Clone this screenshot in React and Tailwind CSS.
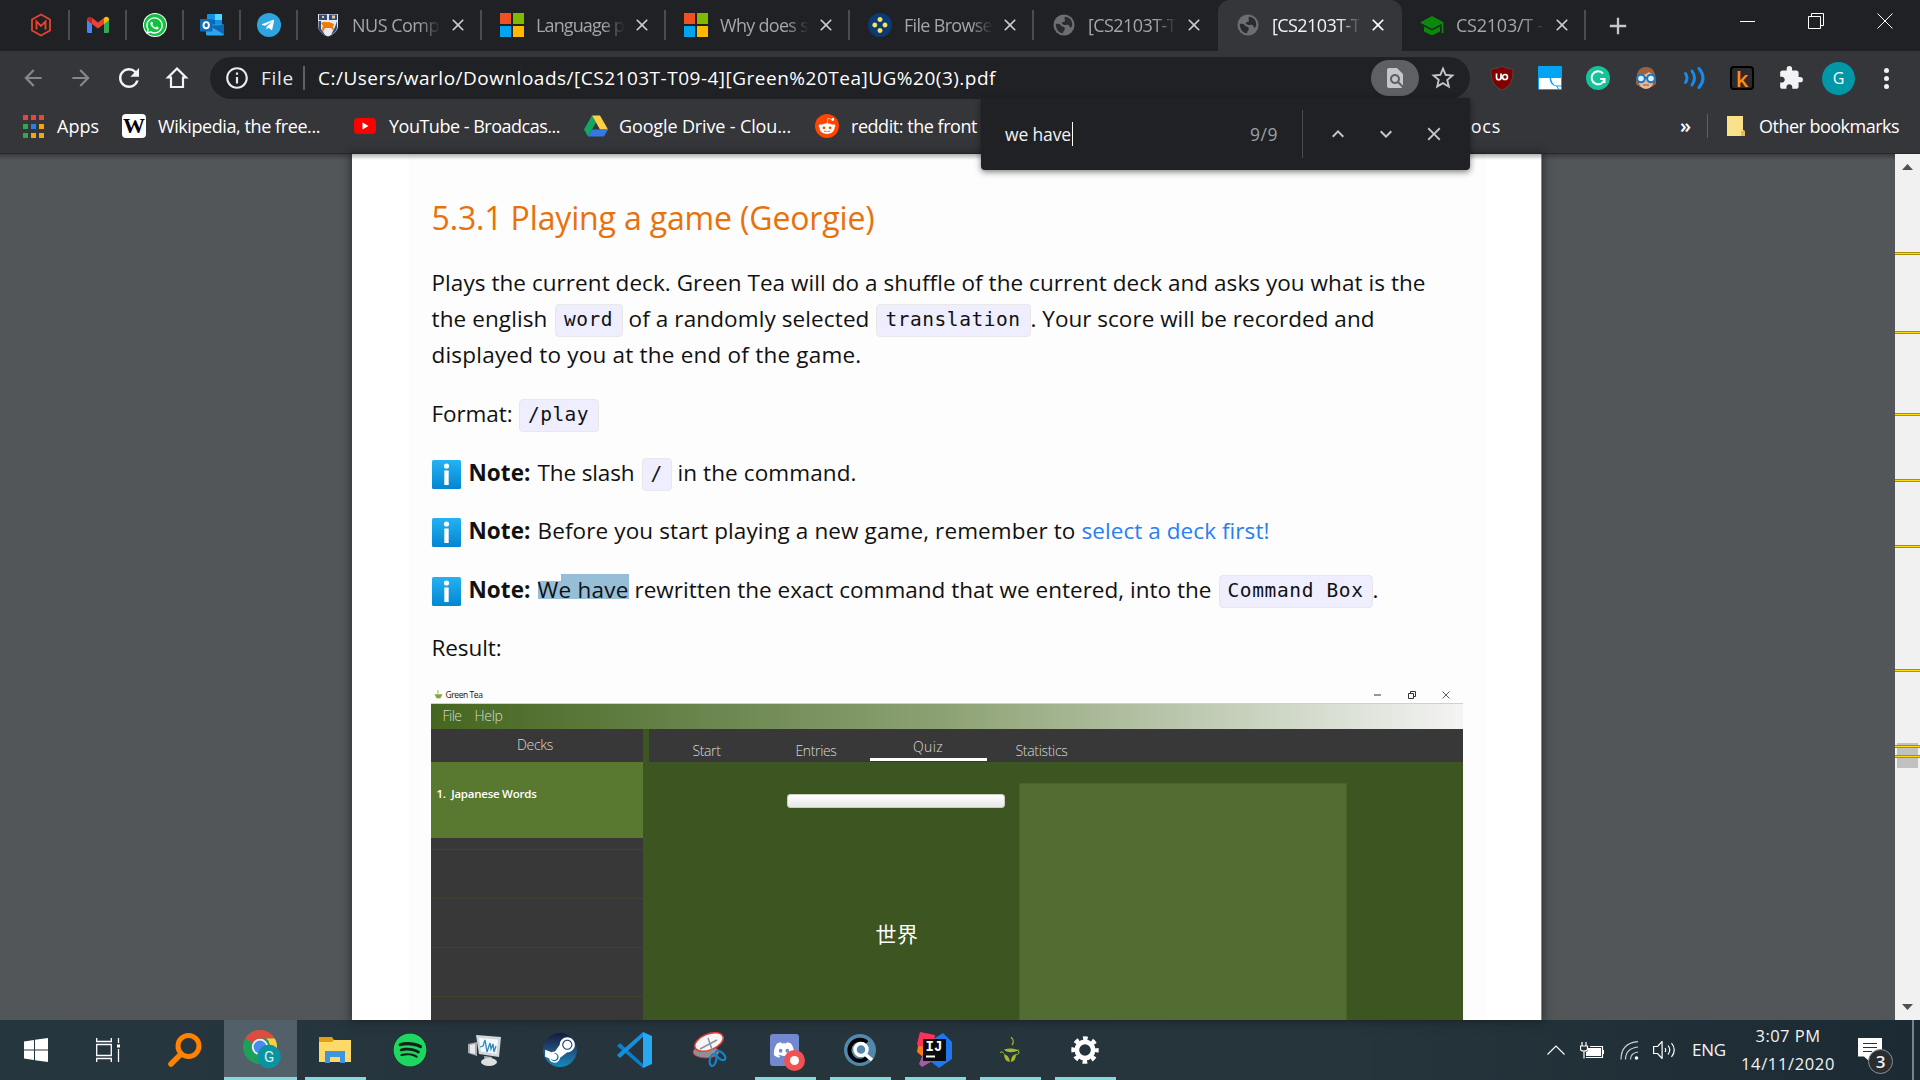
import React, { useLayoutEffect, useRef } from "react";
import { FaWhatsapp, FaTelegramPlane, FaRedditAlien, FaSpotify, FaSteamSymbol, FaDiscord } from "react-icons/fa";
import { MdExtension, MdStarBorder, MdRefresh, MdArrowBack, MdArrowForward, MdInfoOutline, MdAdd, MdClose, MdKeyboardArrowUp, MdKeyboardArrowDown, MdFindInPage } from "react-icons/md";

/* One-line label whose letter spacing is adjusted so the text fills its box. */
function Fit({ className = "", children }) {
  const outer = useRef(null);
  const inner = useRef(null);
  useLayoutEffect(() => {
    const el = inner.current;
    el.style.letterSpacing = "0px";
    const gap = outer.current.getBoundingClientRect().width - el.getBoundingClientRect().width;
    el.style.letterSpacing = gap / el.textContent.length + "px";
  });
  return (
    <span ref={outer} className={"block shrink-0 whitespace-pre " + className}>
      <span ref={inner} className="inline-block">{children}</span>
    </span>
  );
}

/* ---------- small logos ---------- */
const Svg = ({ className, box = "0 0 24 24", children }) => (
  <svg viewBox={box} className={"block shrink-0 " + className} fill="none">{children}</svg>
);

const MaxLogo = () => (
  <Svg className="size-6"><path d="M12 1.500 21 6.500v11L12 22.500 3 17.500v-11z" stroke="#e8432e" strokeWidth="1.800" /><path d="M7.500 16.500v-8l4.500 4.500 4.500-4.500v8" stroke="#e8432e" strokeWidth="1.900" /></Svg>
);
const Gmail = () => (
  <Svg className="size-6">
    <path d="M1 6v12.500A1.500 1.500 0 0 0 2.500 20H6V10z" fill="#4285f4" />
    <path d="M23 6v12.500a1.500 1.500 0 0 1-1.500 1.500H18V10z" fill="#34a853" />
    <path d="M18 5v6l5-4V6.200C23 4 20.500 3 18.800 4.300z" fill="#fbbc04" />
    <path d="M6 11V4.800l6 4.600 6-4.600V11l-6 4.600z" fill="#ea4335" />
    <path d="M1 6.200V7l5 4V5l-.8-.7C3.500 3 1 4 1 6.200z" fill="#c5221f" />
  </Svg>
);
const Outlook = () => (
  <Svg className="size-6">
    <path d="M8 1h13a1 1 0 0 1 1 1v11H7V2a1 1 0 0 1 1-1z" fill="#1490df" />
    <path d="M15 1h6a1 1 0 0 1 1 1v5h-7z" fill="#50d9ff" /><path d="M7 7h8v6H7z" fill="#0364b8" />
    <path d="M6 11.500h18V21a1.500 1.500 0 0 1-1.500 1.500h-15A1.500 1.500 0 0 1 6 21z" fill="#28a8ea" />
    <path d="M24 12v9.500L9 12.500z" fill="#1066b5" />
    <rect x="0" y="6" width="12.500" height="12.500" rx="1" fill="#0f6cbd" />
    <ellipse cx="6.200" cy="12.200" rx="2.700" ry="3.100" stroke="#fff" strokeWidth="1.900" />
  </Svg>
);
const Nus = () => (
  <Svg className="size-6">
    <path d="M2 1h20v12c0 5-5 9-10 10.500C7 22 2 18 2 13z" fill="#e9e9ec" />
    <path d="M3 1.500h8V7H3zM13 1.500h8V7h-8z" fill="#2f4d7c" /><path d="M6 3h2v2H6zM16 2.500h3v3h-3z" fill="#e8c9a0" />
    <path d="M5 10c3-2 6 0 8-1l5 2-1 3 1 4-3-3H9l-2 4-1-3 1-3z" fill="#ef7c00" />
    <path d="M2.500 8v6c0 4 4 7 7 8.500L5 16V8zM21 8v6c0 4-3 6-6 8l4-8z" fill="#2f4d7c" />
  </Svg>
);
const Microsoft = () => (
  <span className="grid size-6 shrink-0 grid-cols-2 gap-[2px]">
    <i className="bg-[#f25022]" /><i className="bg-[#7fba00]" /><i className="bg-[#00a4ef]" /><i className="bg-[#ffb900]" />
  </span>
);
const FileBrowser = () => (
  <Svg className="size-6"><circle cx="12" cy="12" r="12" fill="#0b3a75" />
    {[[12, 6.5], [6.8, 12], [17, 12], [12, 17.5]].map(([x, y]) => <circle key={x + "-" + y} cx={x} cy={y} r="2.200" fill="#ffe25c" stroke="#ffe25c88" strokeWidth="1" />)}
  </Svg>
);
const Globe = () => (
  <Svg className="size-[22px]"><circle cx="12" cy="12" r="11.500" fill="#6b6e73" />
    <path d="M3 11c3-1 5 0 6 2 2 1 4 1 4 3s-2 2-2 5c-5 0-8-5-8-10zM13 3c5 0 8 4 8 9-1 3-2 4-3 2-1-3-2-2-4-2-3 0-5-1-4-3 2-1 3 0 3-2s-1-3 0-4z" fill="#292b2e" />
  </Svg>
);
const GradCap = () => (
  <Svg className="h-[24px] w-6"><path d="M12 3 24 9.500 12 16 0 9.500z" fill="#0a8a0a" /><path d="M4 13.500v5l8 4 8-4v-5l-8 4z" fill="#0a8a0a" /><path d="M22.500 10v10" stroke="#0a8a0a" strokeWidth="1.800" /></Svg>
);
const Drive = () => (
  <Svg className="h-[22px] w-6" box="0 0 24 22">
    <path d="M8 0.500 0 14.500l4 7 8-14z" fill="#11a861" /><path d="M8 .5h8l8 14h-8z" fill="#ffcf48" /><path d="M4 21.500h16l4-7H8z" fill="#3777e3" />
  </Svg>
);
const Ublock = () => (
  <Svg className="size-6"><path d="M12 0c3 2 7 3 11 3 0 9-1 17-11 21C2 20 1 12 1 3c4 0 8-1 11-3z" fill="#800000" stroke="#555" strokeWidth=".7" />
    <path d="M6.500 7.500v4c0 3 4.500 3 4.500 0v-4M11 7.500v5.500" stroke="#fff" strokeWidth="1.700" /><circle cx="15" cy="11" r="2.500" stroke="#fff" strokeWidth="1.700" />
  </Svg>
);
const BlueCard = () => (
  <Svg className="size-6"><rect width="24" height="24" rx="1" fill="#03a4f4" /><path d="M1 12h10.500c.8 6 3 7.500 6.500 8l2 3H1z" fill="#fff" /><path d="M13 12h10v7.500h-4.500c-3.500-.5-4.700-3.500-5.500-7.500z" fill="#fff" /><path d="M19.500 20.500H23V23h-2z" fill="#fff" /></Svg>
);
const Grammarly = () => (
  <Svg className="size-6"><circle cx="12" cy="12" r="12" fill="#15c39a" /><path d="M17 7.500A6.500 6.500 0 1 0 18.500 13H14m4.500 0v4" stroke="#fff" strokeWidth="2" /></Svg>
);
const Face = () => (
  <Svg className="size-6"><path d="M2 18C2 6 5 1 12 1s10 5 10 17l-4 3H6z" fill="#a0623b" /><path d="M5 9c5 0 8-1 10-3l4 3v8c0 3-4 6-7 6s-7-3-7-6z" fill="#e8b796" />
    <circle cx="7" cy="12.500" r="3.800" fill="#dff1fd" stroke="#1b77c5" strokeWidth="2" /><circle cx="17" cy="12.500" r="3.800" fill="#dff1fd" stroke="#1b77c5" strokeWidth="2" /><path d="M10.500 12h3" stroke="#1b77c5" strokeWidth="2" /><path d="M9 19h6" stroke="#9b4a32" /></Svg>
);
const Waves = () => (
  <Svg className="size-6"><g stroke="#148cf0" strokeWidth="3" strokeLinecap="round"><path d="M3.500 7.500q3 4.500 0 9" /><path d="M10 5q5 7 0 14" /><path d="M17 2.500q8 9.500 0 19" /></g></Svg>
);

/* ---------- tab strip ---------- */
const Sep = () => <i className="block h-[30px] w-[2px] shrink-0 bg-[#4a4c50]" />;

function Pinned({ children }) {
  return (
    <div className="flex w-[57px] items-center pb-px">
      <div className="flex flex-1 justify-center">{children}</div><Sep />
    </div>
  );
}

function Tab({ icon, title, w, active, last = true }) {
  return (
    <div className={"relative flex h-[51px] w-[184px] shrink-0 items-center pb-px pl-[17px] " + (active ? "rounded-t-xl bg-[#35363a]" : "")}>
      <span className="flex w-[26px] shrink-0 justify-center">{icon}</span>
      <div className="ml-[11px] w-[89px] mask-r-from-75% mask-r-to-100%">
        <Fit className={w + " text-[18px] leading-6 " + (active ? "text-[#f1f3f4]" : "text-[#a3a7ac]")}>{title}</Fit>
      </div>
      <MdClose className={"ml-[7px] size-[20px] shrink-0 " + (active ? "text-white" : "text-[#c8cacd]")} />
      {last && <span className="ml-auto"><Sep /></span>}
    </div>
  );
}

function TabStrip() {
  return (
    <div className="flex h-[51px] items-center bg-[#202124] pl-[13px]">
      <Pinned><MaxLogo /></Pinned>
      <Pinned><Gmail /></Pinned>
      <Pinned>
        <span className="flex size-6 items-center justify-center rounded-full bg-white"><span className="flex size-[22px] items-center justify-center rounded-full bg-[#10c13f]"><FaWhatsapp className="size-[19px] text-white" /></span></span>
      </Pinned>
      <Pinned><Outlook /></Pinned>
      <Pinned><span className="flex size-6 items-center justify-center rounded-full bg-[#2ca5e0]"><FaTelegramPlane className="mr-[2px] size-[14px] text-white" /></span></Pinned>
      <Tab icon={<Nus />} title="NUS Comp" w="w-[87px]" />
      <Tab icon={<Microsoft />} title="Language p" w="w-[88px]" />
      <Tab icon={<Microsoft />} title="Why does s" w="w-[88px]" />
      <Tab icon={<FileBrowser />} title="File Browse" w="w-[88px]" />
      <Tab icon={<Globe />} title="[CS2103T-T" w="w-[88px]" last={false} />
      <Tab icon={<Globe />} title="[CS2103T-T" w="w-[88px]" active last={false} />
      <Tab icon={<GradCap />} title="CS2103/T -" w="w-[87px]" />
      <MdAdd className="ml-[18px] size-[28px] text-[#c4c6c9]" />
      <Svg className="mb-[9px] ml-[108px] size-[16px]" box="0 0 16 16"><path d="M0 8.500h15" stroke="#fff" /></Svg>
      <Svg className="mb-[9px] ml-[52px] size-[16px]" box="0 0 16 16"><path d="M.5 3.500h12v12H.5zM3.500 3.500v-3h12v12h-3" stroke="#fff" /></Svg>
      <Svg className="mb-[9px] ml-[53px] size-[16px]" box="0 0 16 16"><path d="m.5.5 15 15m0-15-15 15" stroke="#fff" /></Svg>
    </div>
  );
}

/* ---------- address bar ---------- */
function AddressBar() {
  return (
    <div className="flex h-[54px] items-center bg-[#35363a] pl-[20px]">
      <MdArrowBack className="size-[26px] text-[#85878b]" />
      <MdArrowForward className="ml-[22px] size-[26px] text-[#85878b]" />
      <MdRefresh className="ml-[20px] size-[30px] text-[#f1f3f4]" />
      <Svg className="ml-[21px] size-6"><path d="M12 2.500 3 11.500h3V21h12v-9.500h3z" stroke="#f1f3f4" strokeWidth="2.200" /></Svg>
      <div className="ml-[21px] flex h-[42px] w-[1260px] items-center rounded-full bg-[#202124] pl-[14px] text-white">
        <MdInfoOutline className="size-[26px] text-[#e8eaed]" />
        <Fit className="ml-[11px] w-[33px] text-[19px] leading-6 text-[#e8eaed]">File</Fit>
        <i className="ml-[9px] h-6 w-[2px] bg-[#5f6063]" />
        <Fit className="ml-[13px] w-[678px] text-[19px] leading-6">C:/Users/warlo/Downloads/[CS2103T-T09-4][Green%20Tea]UG%20(3).pdf</Fit>
        <span className="ml-auto flex h-9 w-12 items-center justify-center rounded-full bg-[#5f6063]"><MdFindInPage className="size-[24px] text-[#c4c6c9]" /></span>
        <MdStarBorder className="ml-[10px] mr-[13px] size-[28px] text-[#c4c6c9]" />
      </div>
      <div className="ml-[20px] flex items-center gap-6">
        <Ublock /><BlueCard /><Grammarly /><Face /><Waves />
        <span className="flex size-6 items-center justify-center rounded border-2 border-black bg-[#2b2b2b] text-[22px] font-semibold leading-none text-[#ff8c12]">k</span>
        <MdExtension className="size-[26px] text-[#f1f3f4]" />
      </div>
      <span className="ml-[18px] flex size-[33px] items-center justify-center rounded-full bg-[#0097a7] text-[16px] text-white">G</span>
      <span className="ml-[29px] flex flex-col gap-[3px]"><i className="size-[5px] rounded-full bg-[#f1f3f4]" /><i className="size-[5px] rounded-full bg-[#f1f3f4]" /><i className="size-[5px] rounded-full bg-[#f1f3f4]" /></span>
    </div>
  );
}

const appDots = ["bg-[#e8453c]", "bg-[#e8453c]", "bg-[#e8453c]", "bg-[#2da94f]", "bg-[#2f7de1]", "bg-[#f6a609]", "bg-[#2da94f]", "bg-[#f6a609]", "bg-[#f6a609]"];

function Bookmarks() {
  return (
    <div className="flex h-[49px] items-center border-b border-[#28292c] bg-[#35363a] pb-[6px] pl-[23px] text-[18px] leading-6 text-white">
      <span className="grid grid-cols-3 gap-x-[3px] gap-y-[4px]">{appDots.map((c, i) => <i key={i} className={"size-[5px] " + c} />)}</span>
      <Fit className="ml-[13px] w-[42px]">Apps</Fit>
      <span className="ml-[23px] flex size-6 shrink-0 items-center justify-center rounded bg-white font-['Liberation_Serif',serif] text-[22px] font-bold text-black">W</span>
      <Fit className="ml-[12px] w-[162px]">Wikipedia, the free...</Fit>
      <Svg className="ml-[34px] h-[16px] w-[22px]" box="0 0 22 16"><rect width="22" height="16" rx="4" fill="#f00" /><path d="M8.500 4.500v7l6-3.500z" fill="#fff" /></Svg>
      <Fit className="ml-[13px] w-[171px]">YouTube - Broadcas...</Fit>
      <span className="ml-[24px]"><Drive /></span>
      <Fit className="ml-[11px] w-[172px]">Google Drive - Clou...</Fit>
      <span className="ml-[24px] flex size-6 shrink-0 items-center justify-center rounded-full bg-[#ff4500]"><FaRedditAlien className="size-[18px] text-white" /></span>
      <Fit className="ml-[12px] w-[126px]">reddit: the front</Fit>
      <Fit className="ml-[480px] w-[44px]">Docs</Fit>
      <Fit className="ml-[179px] w-[12px] text-[20px] font-semibold">»</Fit>
      <i className="ml-[15px] h-6 w-px bg-[#5f6063]" />
      <Svg className="ml-[19px] h-[22px] w-[18px]" box="0 0 18 22"><path d="M0 1h16v14l2 1v5H0z" fill="#fbe08a" /><path d="M14 16h4v5h-4z" fill="#e9bd4a" /></Svg>
      <Fit className="ml-[14px] w-[140px]">Other bookmarks</Fit>
    </div>
  );
}

function FindBar() {
  return (
    <div className="absolute left-[981px] top-[98px] flex h-[72px] w-[489px] items-center rounded-b bg-[#202124] pl-6 text-[17.500px] text-[#f1f3f4] shadow-[0_2px_6px_rgba(0,0,0,0.5)]">
      <Fit className="w-[66px] leading-6">we have</Fit>
      <i className="ml-px h-6 w-px bg-white" />
      <Fit className="ml-[177px] w-[28px] leading-6 text-[#9aa0a6]">9/9</Fit>
      <i className="ml-[24px] h-12 w-px bg-[#4a4c50]" />
      <MdKeyboardArrowUp className="ml-[23px] size-6 text-[#c4c6c9]" />
      <MdKeyboardArrowDown className="ml-6 size-6 text-[#c4c6c9]" />
      <MdClose className="ml-[25px] size-[22px] text-[#c4c6c9]" />
    </div>
  );
}

/* ---------- document ---------- */
function Code({ className, text, w }) {
  return (
    <code className={"mt-[2px] flex h-[33px] shrink-0 items-center justify-center rounded-[4px] border border-[#e8e8e8] bg-[#eeeeff] font-['DejaVu_Sans_Mono',monospace] text-[19.500px] " + className}>
      <Fit className={w + " leading-8"}>{text}</Fit>
    </code>
  );
}

function Note({ children, className }) {
  return (
    <div className={"flex h-9 items-center " + className}>
      <Svg className="mt-[3px] size-[29px]" box="0 0 29 29">
        <defs><linearGradient id="info" x2="0" y2="1"><stop stopColor="#25b2f3" /><stop offset="1" stopColor="#0286d2" /></linearGradient></defs>
        <rect width="29" height="29" rx="1.500" fill="url(#info)" /><circle cx="14.500" cy="6" r="2.600" fill="#fff" /><path d="M12.300 10.500h4.400V25h-4.400z" fill="#fff" />
      </Svg>
      <Fit className="ml-[8px] w-[62px] font-bold">Note:</Fit>
      {children}
    </div>
  );
}

function GreenTea() {
  return (
    <div className="-ml-px mt-[20px] w-[1032px] font-light">
      <div className="flex h-[17px] items-center pl-[3px]">
        <Svg className="size-[9px]" box="0 0 10 10"><path d="M4 0 5 3 4 4M1 5h8L7 9H3z" fill="#8aa23c" stroke="#8aa23c" strokeWidth=".6" /></Svg>
        <Fit className="ml-[3px] mt-px w-[37px] text-[8.500px] font-normal leading-4">Green Tea</Fit>
        <Svg className="ml-[891px] size-[8px]" box="0 0 8 8"><path d="M0 4h7" stroke="#333" /></Svg>
        <Svg className="ml-[26px] size-[8px]" box="0 0 8 8"><path d="M.5 2.500h5v5h-5zM2.500 2.500v-2h5v5h-2" stroke="#333" /></Svg>
        <Svg className="ml-[26px] size-[8px]" box="0 0 8 8"><path d="m.5.5 7 7m0-7-7 7" stroke="#333" strokeWidth=".8" /></Svg>
      </div>
      <div className="flex h-[26px] items-center border-t border-[#cdd6bd] bg-linear-to-r from-[#45661f] via-[#8da274] to-[#f4f4f4] pb-[2px] pl-[12px] text-[14px] text-[#d5dccb]">
        <Fit className="w-[19px]">File</Fit><Fit className="ml-[13px] w-[28px]">Help</Fit>
      </div>
      <div className="flex h-[291px] bg-[#3d5520] text-[14px] text-[#d8d8d8]">
        <div className="flex w-[212px] flex-col bg-[#383838]">
          <div className="flex h-[33px] justify-center"><Fit className="mr-[3px] mt-[6px] w-[36px] leading-5">Decks</Fit></div>
          <div className="h-[76px] bg-[#58792f] pl-[6px] pt-[22px] text-[11.500px] font-semibold text-white"><Fit className="w-[100px] leading-5">1.  Japanese Words</Fit></div>
          <i className="h-[12px] border-b border-[#40442f]" />
          <i className="h-[49px] border-b border-[#40442f]" />
          <i className="h-[49px] border-b border-[#40442f]" />
          <i className="h-[49px] border-b border-[#40442f]" />
        </div>
        <div className="ml-[6px] flex-1">
          <div className="flex h-[33px] bg-[#383838] pl-[44px] leading-5">
            <Fit className="mt-[12px] w-[28px]">Start</Fit>
            <Fit className="ml-[75px] mt-[12px] w-[41px]">Entries</Fit>
            <div className="ml-[33px] flex w-[117px] flex-col items-center"><Fit className="mt-[8px] w-[30px]">Quiz</Fit><i className="mt-px h-[3px] w-full bg-white" /></div>
            <Fit className="ml-[29px] mt-[12px] w-[52px]">Statistics</Fit>
          </div>
          <div className="flex">
            <div className="ml-[138px] w-[218px] pt-[32px]">
              <div className="h-[14px] rounded-[3px] border border-[#c9cfc0] bg-linear-to-b from-white to-[#e8e8e8]" />
              <div className="mt-[109px] flex pl-[89px]"><Fit className="w-[43px] font-['Noto_Sans_CJK_JP','Noto_Sans_CJK_SC',sans-serif] text-[21px] font-normal leading-8 text-white">世界</Fit></div>
            </div>
            <div className="ml-[14px] mt-[21px] h-[237px] w-[328px] border border-b-0 border-[#486229] bg-[#526c31]" />
          </div>
        </div>
      </div>
    </div>
  );
}

function Document() {
  return (
    <div className="h-[866px] w-[1190px] overflow-hidden border-r border-[#85888a] bg-white px-[56.500px] shadow-[0_0_8px_2px_rgba(20,25,28,0.55)]">
      <div className="h-full w-[1077px] bg-[#fdfdfd] pl-[23px] pt-[44px] text-[22.500px] leading-9 text-[#111]">
        <Fit className="w-[443px] text-[32px] leading-10 text-[#e8710a]">5.3.1 Playing a game (Georgie)</Fit>
        <Fit className="mt-[27px] w-[994px]">Plays the current deck. Green Tea will do a shuffle of the current deck and asks you what is the</Fit>
        <div className="flex h-9 items-center">
          <Fit className="w-[116px]">the english</Fit><Code className="ml-[7px] w-[68px]" text="word" w="w-[49px]" />
          <Fit className="ml-[6px] w-[241px]">of a randomly selected</Fit><Code className="ml-[6px] w-[155px]" text="translation" w="w-[135px]" />
          <Fit className="w-[344px]">. Your score will be recorded and</Fit>
        </div>
        <Fit className="w-[430px]">displayed to you at the end of the game.</Fit>
        <div className="mt-[23px] flex h-9 items-center"><Fit className="w-[81px]">Format:</Fit><Code className="ml-[6px] w-[80px]" text="/play" w="w-[61px]" /></div>
        <Note className="mt-[23px]">
          <Fit className="ml-[7px] w-[97px]">The slash</Fit><Code className="ml-[7px] w-[30px]" text="/" w="w-[12px]" /><Fit className="ml-[6px] w-[179px]">in the command.</Fit>
        </Note>
        <Note className="mt-[22px]">
          <Fit className="ml-[7px] w-[538px]">Before you start playing a new game, remember to</Fit><Fit className="ml-[6px] w-[188px] text-[#2a7ff0]">select a deck first!</Fit>
        </Note>
        <Note className="mt-[23px]">
          <span className="relative ml-[7px] block">
            <i className="absolute left-0 top-[9px] h-[18px] w-[23px] bg-[#97bed7]" />
            <i className="absolute left-[23px] top-[2px] h-[25px] w-[68px] bg-[#97bed7]" />
            <Fit className="relative w-[91px]">We have</Fit>
          </span>
          <Fit className="ml-[6px] w-[577px]">rewritten the exact command that we entered, into the</Fit><Code className="ml-[7px] w-[154px]" text="Command Box" w="w-[136px]" /><Fit className="w-[5px]">.</Fit>
        </Note>
        <Fit className="mt-[22px] w-[70px]">Result:</Fit>
        <GreenTea />
      </div>
    </div>
  );
}

const hits = ["top-[98px]", "top-[177px]", "top-[259px]", "top-[325px]", "top-[391px]", "top-[515px]", "top-[591px]", "top-[601px]"];

function Viewer() {
  return (
    <div className="relative flex h-[866px] bg-[#525659] pl-[352px]">
      <Document />
      <i className="absolute inset-x-0 top-0 h-[6px] bg-linear-to-b from-black/30 to-transparent" />
      <div className="relative ml-auto flex w-[25px] flex-col items-center justify-between bg-[#f1f1f1] py-[10px]">
        <Svg className="h-[6px] w-[11px]" box="0 0 11 6"><path d="M5.500 0 11 6H0z" fill="#505050" /></Svg>
        <i className="absolute left-[2px] top-[589px] h-[25px] w-[21px] bg-[#c1c1c1]" />
        {hits.map((t) => <i key={t} className={"absolute left-0 h-[3px] w-full border-y border-[#ac9200] bg-[#ffdd00] " + t} />)}
        <Svg className="h-[6px] w-[11px]" box="0 0 11 6"><path d="M5.500 6 11 0H0z" fill="#505050" /></Svg>
      </div>
    </div>
  );
}

/* ---------- taskbar ---------- */
function Cell({ children, open, active }) {
  return (
    <div className={"flex h-[60px] w-[73px] shrink-0 flex-col items-center " + (active ? "bg-[#52606a]" : "")}>
      <div className="flex h-[57px] items-center pr-px pt-[2px]">{children}</div>
      {(open || active) && <i className={"h-[3px] bg-[#82dadb] " + (active ? "w-full" : "w-[61px]")} />}
    </div>
  );
}

const Chrome = () => (
  <Svg className="ml-[5px] h-[40px] w-[40px]" box="0 0 40 40">
    <circle cx="17" cy="17" r="17" fill="#1fa05a" /><path d="M17 0a17 17 0 0 1 14.700 8.500H17a8.500 8.500 0 0 0-7.400 4.300L2.300 8.500A17 17 0 0 1 17 0z" fill="#e04a3f" />
    <path d="M31.700 8.500A17 17 0 0 1 17 34l7.400-12.700a8.500 8.500 0 0 0-1-12.800z" fill="#ffcd40" />
    <circle cx="17" cy="17" r="8.200" fill="#f1f1f1" /><circle cx="17" cy="17" r="6.400" fill="#4a8af4" />
    <circle cx="26" cy="26.500" r="11.700" fill="#0b93a2" /><text x="26" y="32" textAnchor="middle" fontSize="15" fill="#d8f3f5" fontFamily="Roboto, sans-serif">G</text>
  </Svg>
);
const Explorer = () => (
  <Svg className="h-[26px] w-8" box="0 0 32 26"><path d="M0 0h13l2 3h17v22H0z" fill="#e0a010" /><path d="M0 5h13l2-2h17v22H0z" fill="#ffd968" /><path d="M6 26V14h20v12h-5v-6H11v6z" fill="#3d95dd" /></Svg>
);
const Monitor = () => (
  <Svg className="size-[34px]" box="0 0 34 34"><path d="M0 11 9 9v14l-9-3z" fill="#a9adb0" /><path d="m2 12 5-1v10l-5-1z" fill="#e7e9ea" /><path d="M8 2l25 2-2 20-20-3z" fill="#d5d8da" /><path d="m11 5 19 1.500-1.500 14.500L13 18.500z" fill="#f3f9fd" />
    <path d="m12 14 3-1 2-6 2 12 3-9 1 6 2-5 1 8 2-6" stroke="#2d87bd" strokeWidth="1.300" /><path d="m16 23 8 1-1 5h-6z" fill="#b2b5b7" /><ellipse cx="21" cy="29" rx="8" ry="4" fill="#dcdedf" /></Svg>
);
const VsCode = () => (
  <Svg className="size-9" box="0 0 36 36"><path d="m3 11 24 22-1 3L0 14z" fill="#0a7fcb" /><path d="m3 26 24-22-1-4L0 23z" fill="#1590dd" /><path d="m26 0 9 4v28l-9 4z" fill="#27a9f2" /></Svg>
);
const Snip = () => (
  <Svg className="size-9" box="0 0 36 36"><ellipse cx="14" cy="20" rx="13" ry="6" fill="#8e9194" stroke="#c33" strokeWidth=".8" /><ellipse cx="17" cy="10" rx="15" ry="8" transform="rotate(-22 17 10)" fill="#f5f6f7" stroke="#e23b35" strokeWidth="1.500" />
    <path d="m16 6 6 17M8 17 25 8" stroke="#8b9399" strokeWidth="1.500" /><g stroke="#1682c5" strokeWidth="2.200"><ellipse cx="21" cy="28" rx="3.200" ry="6" transform="rotate(12 21 28)" /><ellipse cx="28.500" cy="23.500" rx="3.200" ry="6" transform="rotate(-48 28.500 23.500)" /></g></Svg>
);
const Discord = () => (
  <span className="relative mr-[2px] flex h-[32px] w-[29px] items-center justify-center rounded-[3px] bg-[#7289cf]">
    <FaDiscord className="size-[22px] text-white" />
    <i className="absolute -bottom-[5px] -right-[6px] flex size-[21px] items-center justify-center rounded-full bg-[#f05252]"><i className="size-[9px] rounded-full bg-white" /></i>
  </span>
);
const QSearch = () => (
  <Svg className="size-8" box="0 0 32 32"><circle cx="16" cy="16" r="16" fill="#5189ac" /><path d="M23 8.500A10.500 10.500 0 1 0 23 24" stroke="#000" strokeWidth="4" /><circle cx="17" cy="15.500" r="6" stroke="#fff" strokeWidth="3.500" /><path d="m21 20 7 6" stroke="#fff" strokeWidth="3.500" /></Svg>
);
const IntelliJ = () => (
  <Svg className="size-9" box="0 0 36 36"><path d="m3 0 15 3-2 20H6L0 12z" fill="#fe315d" /><path d="m1 14 12 1v8l-7 2-6-5z" fill="#f97a12" /><path d="m6 22 13 5-14 8-3-3z" fill="#a65aa0" /><path d="m18 6 8-5 9 9v17l-13 9-9-7z" fill="#1f77ee" /><path d="M6 7h23v22H6z" fill="#0c0c0c" />
    <text x="8.500" y="19" fontSize="14" fontWeight="700" fill="#fff" fontFamily="Liberation Mono, monospace">IJ</text><path d="M9 24.500h9" stroke="#fff" strokeWidth="2" /></Svg>
);
const Tea = () => (
  <Svg className="h-[26px] w-[22px]" box="0 0 22 26"><path d="M12 0q4 4 1 8" stroke="#a4a82c" strokeWidth="1.300" /><path d="M5 12.500q7-2 12 0l4 .5q-4 2-9 2.200-5 0-7-2.700z" fill="#a7b82e" /><path d="M1 15.500q2-2 4 1M19 14q3 2-2 4" stroke="#a7b82e" /><path d="M5 17q5 1 6 8-6-1-6-8zM17 17q-5 1-5 8 5-1 5-8z" fill="#a7b82e" /></Svg>
);
const Gear = () => (
  <Svg className="size-[28px]"><circle cx="12" cy="12" r="7" stroke="#fff" strokeWidth="4" /><circle cx="12" cy="12" r="10" stroke="#fff" strokeWidth="3.500" strokeDasharray="4 3.854" strokeDashoffset="2" /></Svg>
);

function Taskbar() {
  return (
    <div className="flex h-[60px] items-center bg-linear-to-r from-[#26363e] via-[#26343c] via-70% to-[#1c2b33] text-[#f3f3f3]">
      <Svg className="ml-[24px] size-6"><path d="M0 3.500 10 2v9.500H0zM11 1.800 24 0v11.500H11zM0 12.500h10V22L0 20.500zM11 12.500h13V24l-13-1.800z" fill="#fff" /></Svg>
      <Svg className="ml-[48px] h-[24px] w-[25px]" box="0 0 25 24"><path d="M.7 0v3.500h14.600V0M.7 6.500h14.600v11H.7zM.7 24v-3.500h14.600V24M22.500 0v5M22.500 11v13" stroke="#fff" strokeWidth="1.300" /><path d="M21 6.500h3v3h-3z" fill="#fff" /></Svg>
      <Svg className="ml-[47px] h-[34px] w-[34px]" box="0 0 34 34"><circle cx="20.500" cy="13" r="10.500" stroke="#ff8200" strokeWidth="5" /><path d="m13 21-10 10" stroke="#ff8200" strokeWidth="5.500" strokeLinecap="round" /></Svg>
      <div className="ml-[22px] flex gap-[2px]">
        <Cell active><Chrome /></Cell>
        <Cell open><Explorer /></Cell>
        <Cell><span className="flex size-[34px] items-center justify-center rounded-full bg-[#14201a]"><FaSpotify className="size-[34px] text-[#1ed760]" /></span></Cell>
        <Cell><Monitor /></Cell>
        <Cell><span className="flex size-[34px] items-center justify-center overflow-hidden rounded-full bg-linear-to-b from-[#151a3c] to-[#0f8bc0]"><FaSteamSymbol className="size-[34px] text-white" /></span></Cell>
        <Cell><VsCode /></Cell>
        <Cell><Snip /></Cell>
        <Cell open><Discord /></Cell>
        <Cell open><QSearch /></Cell>
        <Cell open><IntelliJ /></Cell>
        <Cell open><Tea /></Cell>
        <Cell open><Gear /></Cell>
      </div>
      <Svg className="ml-[425px] h-[10px] w-[18px]" box="0 0 18 10"><path d="m.5 9.500 8.500-8.500 8.500 8.500" stroke="#fff" strokeWidth="1.200" /></Svg>
      <Svg className="ml-[15px] h-[17px] w-[24px]" box="0 0 24 17"><path d="M2 0v4M6 0v4M.5 4h7v3q0 2-3.500 2T.5 7zM4 9v7.500M6 15.500h16.500v-11H10M23.500 8v4" stroke="#fff" strokeWidth="1.200" /><path d="M8 6h13v8H6v-4l2-1z" fill="#fff" /></Svg>
      <Svg className="ml-[16px] size-[19px]" box="0 0 19 19"><path d="M1 18.500Q1 2 18 .6M5.500 18.500q0-11 12.500-12.500M10.500 18.500q0-6.500 7.500-7.500" stroke="#cfd4d7" strokeWidth="1.200" /><circle cx="16.500" cy="17" r="1.800" fill="#fff" /></Svg>
      <Svg className="ml-[14px] h-[18px] w-[23px]" box="0 0 23 18"><path d="M.6 5.500h4l4.500-5v17l-4.500-5h-4zM12 7q1.500 2 0 4M15 4.500q3.500 4.500 0 9M18.500 2q5.500 7 0 14" stroke="#fff" strokeWidth="1.200" /></Svg>
      <Fit className="ml-[16px] w-[34px] text-[17px] leading-6">ENG</Fit>
      <div className="ml-[15px] flex w-[94px] flex-col items-center text-[16.500px] leading-[28px]"><Fit className="w-[65px]">3:07 PM</Fit><Fit className="w-[94px]">14/11/2020</Fit></div>
      <div className="relative ml-[23px]">
        <Svg className="size-6"><path d="M0 0h24v18.500H12v5.500l-6-5.500H0z" fill="#fff" /><path d="M5 5.500h14M5 9.500h14M5 13.500h9" stroke="#25343c" strokeWidth="1.200" /></Svg>
        <span className="absolute left-[10px] top-[11px] flex size-[25px] items-center justify-center rounded-full border border-[#8a9195] bg-[#2b2d2f] text-[17px] font-semibold">3</span>
      </div>
      <i className="ml-auto mr-[6px] h-full w-[2px] bg-[#78828a]" />
    </div>
  );
}

export default function App() {
  return (
    <main className="relative h-[1080px] w-[1920px] overflow-hidden bg-[#202124] font-['Open_Sans','Noto_Sans',sans-serif]">
      <TabStrip />
      <AddressBar />
      <Bookmarks />
      <Viewer />
      <Taskbar />
      <FindBar />
    </main>
  );
}
